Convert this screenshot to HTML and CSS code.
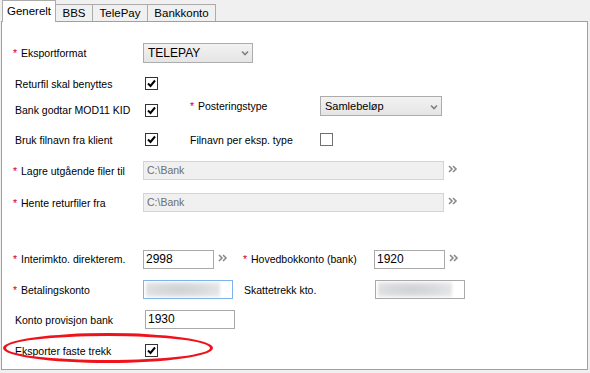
FILE: index.html
```html
<!DOCTYPE html>
<html lang="no">
<head>
    <meta charset="UTF-8">
    <title>Bankoppsett</title>
    <link rel="stylesheet" href="styles.css">
</head>
<body>
    <div class="tabs">
        <div class="tab active tab-gen">Generelt</div>
        <div class="tab tab-bbs">BBS</div>
        <div class="tab tab-tp">TelePay</div>
        <div class="tab tab-bk">Bankkonto</div>
    </div>

    <div class="panel">
        <div class="row r1">
            <label class="lbl req"><span class="star">*</span>Eksportformat</label>
            <div class="select select-format">
                <span>TELEPAY</span>
                <svg class="chev" width="8" height="6" viewBox="0 0 8 6"><path d="M1 1.5 L4 4.5 L7 1.5" fill="none" stroke="#808080" stroke-width="1.6"/></svg>
            </div>
        </div>

        <div class="row r2">
            <label class="lbl">Returfil skal benyttes</label>
            <span class="check on"><svg width="11" height="11" viewBox="0 0 11 11"><path d="M2 5.5 L4.5 8 L9 2.5" fill="none" stroke="#000" stroke-width="2"/></svg></span>
        </div>

        <div class="row r3">
            <label class="lbl">Bank godtar MOD11 KID</label>
            <div class="cell-sm">
                <span class="check on"><svg width="11" height="11" viewBox="0 0 11 11"><path d="M2 5.5 L4.5 8 L9 2.5" fill="none" stroke="#000" stroke-width="2"/></svg></span>
            </div>
            <div class="group-top">
                <label class="lbl lbl-mid req"><span class="star">*</span>Posteringstype</label>
                <div class="select select-post">
                    <span>Samlebeløp</span>
                    <svg class="chev" width="8" height="6" viewBox="0 0 8 6"><path d="M1 1.5 L4 4.5 L7 1.5" fill="none" stroke="#808080" stroke-width="1.6"/></svg>
                </div>
            </div>
        </div>

        <div class="row r4">
            <label class="lbl">Bruk filnavn fra klient</label>
            <div class="cell-sm">
                <span class="check on"><svg width="11" height="11" viewBox="0 0 11 11"><path d="M2 5.5 L4.5 8 L9 2.5" fill="none" stroke="#000" stroke-width="2"/></svg></span>
            </div>
            <label class="lbl lbl-mid">Filnavn per eksp. type</label>
            <span class="check"></span>
        </div>

        <div class="row r5">
            <label class="lbl req"><span class="star">*</span>Lagre utgående filer til</label>
            <div class="input disabled w-path">C:\Bank</div>
            <svg class="more" width="11" height="8" viewBox="0 0 11 8"><path d="M1 1 L4 4 L1 7 M5 1 L8 4 L5 7" fill="none" stroke="#8a8a8a" stroke-width="1.6"/></svg>
        </div>

        <div class="row r6">
            <label class="lbl req"><span class="star">*</span>Hente returfiler fra</label>
            <div class="input disabled w-path">C:\Bank</div>
            <svg class="more" width="11" height="8" viewBox="0 0 11 8"><path d="M1 1 L4 4 L1 7 M5 1 L8 4 L5 7" fill="none" stroke="#8a8a8a" stroke-width="1.6"/></svg>
        </div>

        <div class="row r7">
            <label class="lbl req"><span class="star">*</span>Interimkto. direkterem.</label>
            <div class="cell-md">
                <div class="input w-short num">2998</div>
                <svg class="more" width="11" height="8" viewBox="0 0 11 8"><path d="M1 1 L4 4 L1 7 M5 1 L8 4 L5 7" fill="none" stroke="#8a8a8a" stroke-width="1.6"/></svg>
            </div>
            <label class="lbl lbl-right req"><span class="star">*</span>Hovedbokkonto (bank)</label>
            <div class="input w-short num">1920</div>
            <svg class="more" width="11" height="8" viewBox="0 0 11 8"><path d="M1 1 L4 4 L1 7 M5 1 L8 4 L5 7" fill="none" stroke="#8a8a8a" stroke-width="1.6"/></svg>
        </div>

        <div class="row r8">
            <label class="lbl req"><span class="star">*</span>Betalingskonto</label>
            <div class="cell-md">
                <div class="input w-mid focus"><span class="blur"></span></div>
            </div>
            <label class="lbl lbl-right">Skattetrekk kto.</label>
            <div class="input w-mid"><span class="blur"></span></div>
        </div>

        <div class="row r9">
            <label class="lbl">Konto provisjon bank</label>
            <div class="input w-mid num">1930</div>
        </div>

        <div class="row r10">
            <span class="ring"></span>
            <label class="lbl">Eksporter faste trekk</label>
            <span class="check on"><svg width="11" height="11" viewBox="0 0 11 11"><path d="M2 5.5 L4.5 8 L9 2.5" fill="none" stroke="#000" stroke-width="2"/></svg></span>
        </div>
    </div>
</body>
</html>
```

FILE: styles.css
```css
body {
    margin: 0;
    background-color: #f0f0f0;
    font-family: "Liberation Sans", Arial, sans-serif;
    font-size: 10.5px;
    color: #000;
    width: 590px;
    height: 373px;
    overflow: hidden;
}
.tabs {
    display: flex;
    align-items: flex-end;
    height: 21px;
    padding-left: 2px;
}
.tab {
    box-sizing: border-box;
    height: 17px;
    border: 1px solid #acacac;
    border-bottom: none;
    margin-left: -1px;
    background-color: #f0f0f0;
    font-size: 11.5px;
    line-height: 17px;
    text-align: center;
    white-space: nowrap;
}
.tab:first-child {
    margin-left: 0;
}
.tab-gen { width: 54px; }
.tab-bbs { width: 38px; }
.tab-tp { width: 56px; }
.tab-bk { width: 69px; }
.active {
    position: relative;
    z-index: 1;
    height: 22px;
    margin-bottom: -1px;
    background-color: #fff;
    line-height: 20px;
}
.panel {
    margin-left: 1px;
    width: 585px;
    height: 347px;
    border: 1px solid #a0a0a0;
    background-color: #fff;
}
.row {
    display: flex;
    align-items: center;
    height: 19px;
    position: relative;
}
.r1 { margin-top: 20px; height: 21px; }
.r2 { margin-top: 11px; }
.r3 { margin-top: 3px; height: 24px; align-items: flex-end; }
.r4 { margin-top: 10px; }
.r5 { margin-top: 12px; }
.r6 { margin-top: 13px; }
.r7 { margin-top: 37px; height: 20px; }
.r8 { margin-top: 11px; }
.r9 { margin-top: 11px; }
.r10 { margin-top: 12px; }

.lbl {
    display: block;
    width: 130px;
    margin-left: 11px;
    padding-left: 2px;
    white-space: nowrap;
}
.lbl.req {
    padding-left: 0;
}
.star {
    display: inline-block;
    width: 8px;
    color: #e00000;
}
.lbl-mid {
    width: 130px;
    margin-left: 0;
    padding-left: 0;
}
.lbl-right {
    width: 131px;
    margin-left: 0;
    padding-left: 1px;
}
.lbl-right.req {
    padding-left: 0;
}
.cell-sm {
    width: 45px;
    height: 19px;
    display: flex;
    align-items: center;
}
.cell-md {
    width: 100px;
    display: flex;
    align-items: center;
}
.group-top {
    display: flex;
    align-items: center;
    align-self: flex-start;
    height: 20px;
}
.r3 > .lbl {
    height: 19px;
    line-height: 19px;
}

.select {
    display: flex;
    align-items: center;
    justify-content: space-between;
    box-sizing: border-box;
    height: 20px;
    border: 1px solid #acacac;
    background: linear-gradient(#f2f2f2, #e5e5e5);
    padding: 0 3px 0 4px;
}
.select-format {
    width: 110px;
    font-size: 12px;
}
.select-post {
    width: 122px;
    font-size: 11px;
}
.chev {
    margin-top: 1px;
}

.check {
    display: flex;
    align-items: center;
    justify-content: center;
    box-sizing: border-box;
    width: 13px;
    height: 13px;
    border: 1px solid #333;
    background-color: #fff;
}
.check:not(.on) {
    border-color: #707070;
}

.input {
    box-sizing: border-box;
    height: 19px;
    border: 1px solid #a9a9a9;
    background-color: #fff;
    padding: 0 3px;
    line-height: 17px;
    position: relative;
    overflow: hidden;
}
.input.num {
    font-size: 12px;
    padding-left: 2px;
}
.disabled {
    background-color: #f0f0f0;
    border-color: #d4d4d4;
    color: #6d6d6d;
}
.focus {
    border-color: #7eb4ea;
}
.w-path { width: 301px; }
.w-short { width: 71px; }
.w-mid { width: 90px; }

.blur {
    position: absolute;
    left: 2px;
    top: 1px;
    width: 74px;
    height: 15px;
    background: radial-gradient(ellipse at 45% 50%, #cfd0d2 0%, #dcdde0 50%, #efeff0 100%);
    filter: blur(1.5px);
}
.more {
    margin-left: 4px;
    margin-top: -3px;
}

.ring {
    position: absolute;
    left: 1px;
    top: -8px;
    width: 204px;
    height: 24px;
    border: 3.5px solid #f0121b;
    border-radius: 50%;
}
```
